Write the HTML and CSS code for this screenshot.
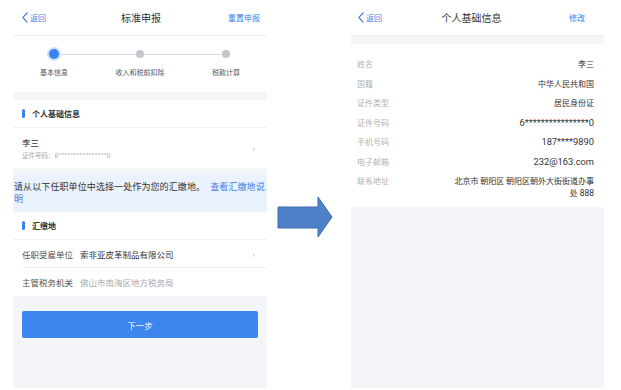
FILE: index.html
```html
<!DOCTYPE html>
<html lang="zh-CN">
<head>
<meta charset="utf-8">
<link rel="stylesheet" href="styles.css">
</head>
<body>
<div class="page">
  <section class="panel">
    <header class="nav">
      <a class="back"><svg class="chev" viewBox="0 0 6 11" width="6" height="11"><polyline points="5.5,0.5 0.8,5.5 5.5,10.5" fill="none" stroke="#3f80e6" stroke-width="1.1"/></svg>返回</a>
      <span class="title">标准申报</span>
      <a class="action">重置申报</a>
    </header>
    <div class="steps">
      <div class="step active"><span class="dot"></span><span class="label">基本信息</span></div>
      <div class="step"><span class="dot"></span><span class="label">收入和税前扣除</span></div>
      <div class="step"><span class="dot"></span><span class="label">税款计算</span></div>
    </div>
    <div class="sec-head"><span class="bar"></span>个人基础信息</div>
    <div class="person">
      <div class="pinfo">
        <div class="pname">李三</div>
        <div class="pid">证件号码：6****************0</div>
      </div>
      <span class="arrow-r">›</span>
    </div>
    <div class="notice">请从以下任职单位中选择一处作为您的汇缴地。 <span class="link">查看汇缴地说<br>明</span></div>
    <div class="sec-head"><span class="bar"></span>汇缴地</div>
    <div class="field first">
      <span class="flabel">任职受雇单位</span>
      <span class="fvalue">索非亚皮革制品有限公司</span>
      <span class="arrow-r">›</span>
    </div>
    <div class="field">
      <span class="flabel">主管税务机关</span>
      <span class="fvalue muted">佛山市南海区地方税务局</span>
    </div>
    <button class="next">下一步</button>
  </section>

  <svg class="big-arrow" viewBox="0 0 56 42" width="56" height="42">
    <polygon points="1,11 41,11 41,1 55,21 41,41 41,32 1,32" fill="#4f81c9" stroke="#3d6db0" stroke-width="1"/>
  </svg>

  <section class="panel right">
    <header class="nav nav-r">
      <a class="back"><svg class="chev" viewBox="0 0 6 11" width="6" height="11"><polyline points="5.5,0.5 0.8,5.5 5.5,10.5" fill="none" stroke="#3f80e6" stroke-width="1.1"/></svg>返回</a>
      <span class="title">个人基础信息</span>
      <a class="action">修改</a>
    </header>
    <div class="info">
      <div class="irow"><span class="ilabel">姓名</span><span class="ivalue">李三</span></div>
      <div class="irow"><span class="ilabel">国籍</span><span class="ivalue">中华人民共和国</span></div>
      <div class="irow"><span class="ilabel">证件类型</span><span class="ivalue">居民身份证</span></div>
      <div class="irow"><span class="ilabel">证件号码</span><span class="ivalue num">6****************0</span></div>
      <div class="irow"><span class="ilabel">手机号码</span><span class="ivalue num">187****9890</span></div>
      <div class="irow"><span class="ilabel">电子邮箱</span><span class="ivalue num">232@163.com</span></div>
      <div class="irow"><span class="ilabel">联系地址</span><span class="ivalue addr">北京市 朝阳区 朝阳区朝外大街街道办事<br>处 <span class="num">888</span></span></div>
    </div>
  </section>
</div>
</body>
</html>
```

FILE: styles.css
```css
* { box-sizing: border-box; }
html, body { margin: 0; padding: 0; background: #ffffff; }
body {
  font-family: "Noto Sans CJK SC", "Noto Sans", sans-serif;
  color: #333;
  width: 621px;
  height: 390px;
  overflow: hidden;
}
.page {
  display: flex;
  align-items: flex-start;
  padding-left: 13px;
}
.panel {
  width: 254px;
  height: 388px;
  background: #f3f5f9;
  display: flex;
  flex-direction: column;
}
.panel.right { width: 253px; margin-left: 18px; }
.big-arrow { margin-left: 10px; margin-top: 196px; flex: none; }

.nav {
  height: 36px;
  background: #fff;
  border-bottom: 1px solid #efefef;
  display: grid;
  grid-template-columns: 1fr auto 1fr;
  align-items: center;
  padding: 0 7px 0 9px;
  flex: none;
}
.nav-r { padding: 0 19px 0 7px; }
.back {
  display: flex;
  align-items: center;
  gap: 2px;
  color: #3f80e6;
  font-size: 8px;
}
.chev { display: block; }
.title { font-size: 10px; color: #333; }
.action { justify-self: end; color: #3f80e6; font-size: 8px; }

.steps {
  position: relative;
  height: 56px;
  background: #fff;
  display: flex;
  justify-content: space-between;
  padding: 0 11px;
  margin-bottom: 8px;
  flex: none;
}
.steps::before {
  content: "";
  position: absolute;
  left: 41px;
  right: 41px;
  top: 18px;
  height: 1px;
  background: #dcdde2;
}
.step {
  position: relative;
  width: 60px;
  display: flex;
  flex-direction: column;
  align-items: center;
}
.dot {
  margin-top: 14px;
  width: 8px;
  height: 8px;
  border-radius: 50%;
  background: #c4c6ce;
}
.step.active .dot {
  margin-top: 13px;
  width: 10px;
  height: 10px;
  background: #3b82f0;
  box-shadow: 0 0 0 2px #cfe0fb;
}
.label { margin-top: 10px; font-size: 7px; color: #555; line-height: 9px; }
.step.active .label { margin-top: 9px; }

.sec-head {
  height: 28px;
  background: #fff;
  border-bottom: 1px solid #f0f1f3;
  display: flex;
  align-items: center;
  padding-left: 9px;
  font-size: 8px;
  font-weight: 700;
  color: #333;
  flex: none;
}
.bar {
  width: 3px;
  height: 9px;
  border-radius: 1.5px;
  background: #3b82f0;
  margin-right: 7px;
}
.person {
  height: 40px;
  background: #fff;
  display: flex;
  align-items: center;
  padding: 0 12px 0 9px;
  flex: none;
}
.pinfo { flex: 1; }
.pname { font-size: 8.5px; line-height: 12px; color: #333; }
.pid { font-size: 6.5px; line-height: 10px; color: #aaa; margin-top: 2px; }
.arrow-r { color: #c8c8c8; font-size: 10px; line-height: 10px; }

.notice {
  margin-top: 6px;
  background: #eaf2fd;
  padding: 7px 0 7px 1px;
  font-size: 9px;
  letter-spacing: 0.1px;
  line-height: 12px;
  color: #333;
  white-space: nowrap;
  overflow: hidden;
  flex: none;
}
.link { color: #3f80e6; margin-left: 3px; }

.field {
  height: 28px;
  background: #fff;
  display: flex;
  align-items: center;
  padding: 0 12px 0 9px;
  font-size: 8.5px;
  flex: none;
}
.field.first { position: relative; }
.field.first::after {
  content: "";
  position: absolute;
  left: 9px;
  right: 0;
  bottom: 0;
  height: 1px;
  background: #f0f1f3;
}
.flabel { width: 58px; color: #555; }
.fvalue { flex: 1; color: #333; }
.fvalue.muted { color: #aaa; }

.next {
  margin: 15px 9px 0;
  height: 27px;
  border: 0;
  border-radius: 2px;
  background: #3d86f0;
  color: #fff;
  font-family: inherit;
  font-size: 8.5px;
  flex: none;
}

.info {
  margin-top: 8px;
  background: #fff;
  padding: 10px 10px 4px 6px;
  flex: none;
}
.irow {
  display: flex;
  justify-content: space-between;
  align-items: flex-start;
  padding: 4px 0;
  line-height: 11.5px;
}
.ilabel { font-size: 8px; color: #b3b3b3; }
.ivalue {
  font-size: 8px;
  color: #333;
  text-align: right;
}
.num {
  font-family: "Roboto", "Noto Sans CJK SC", sans-serif;
  font-size: 9.3px;
}
.ivalue.addr { white-space: nowrap; }
.ivalue.addr .num { font-size: 8.5px; }
```
